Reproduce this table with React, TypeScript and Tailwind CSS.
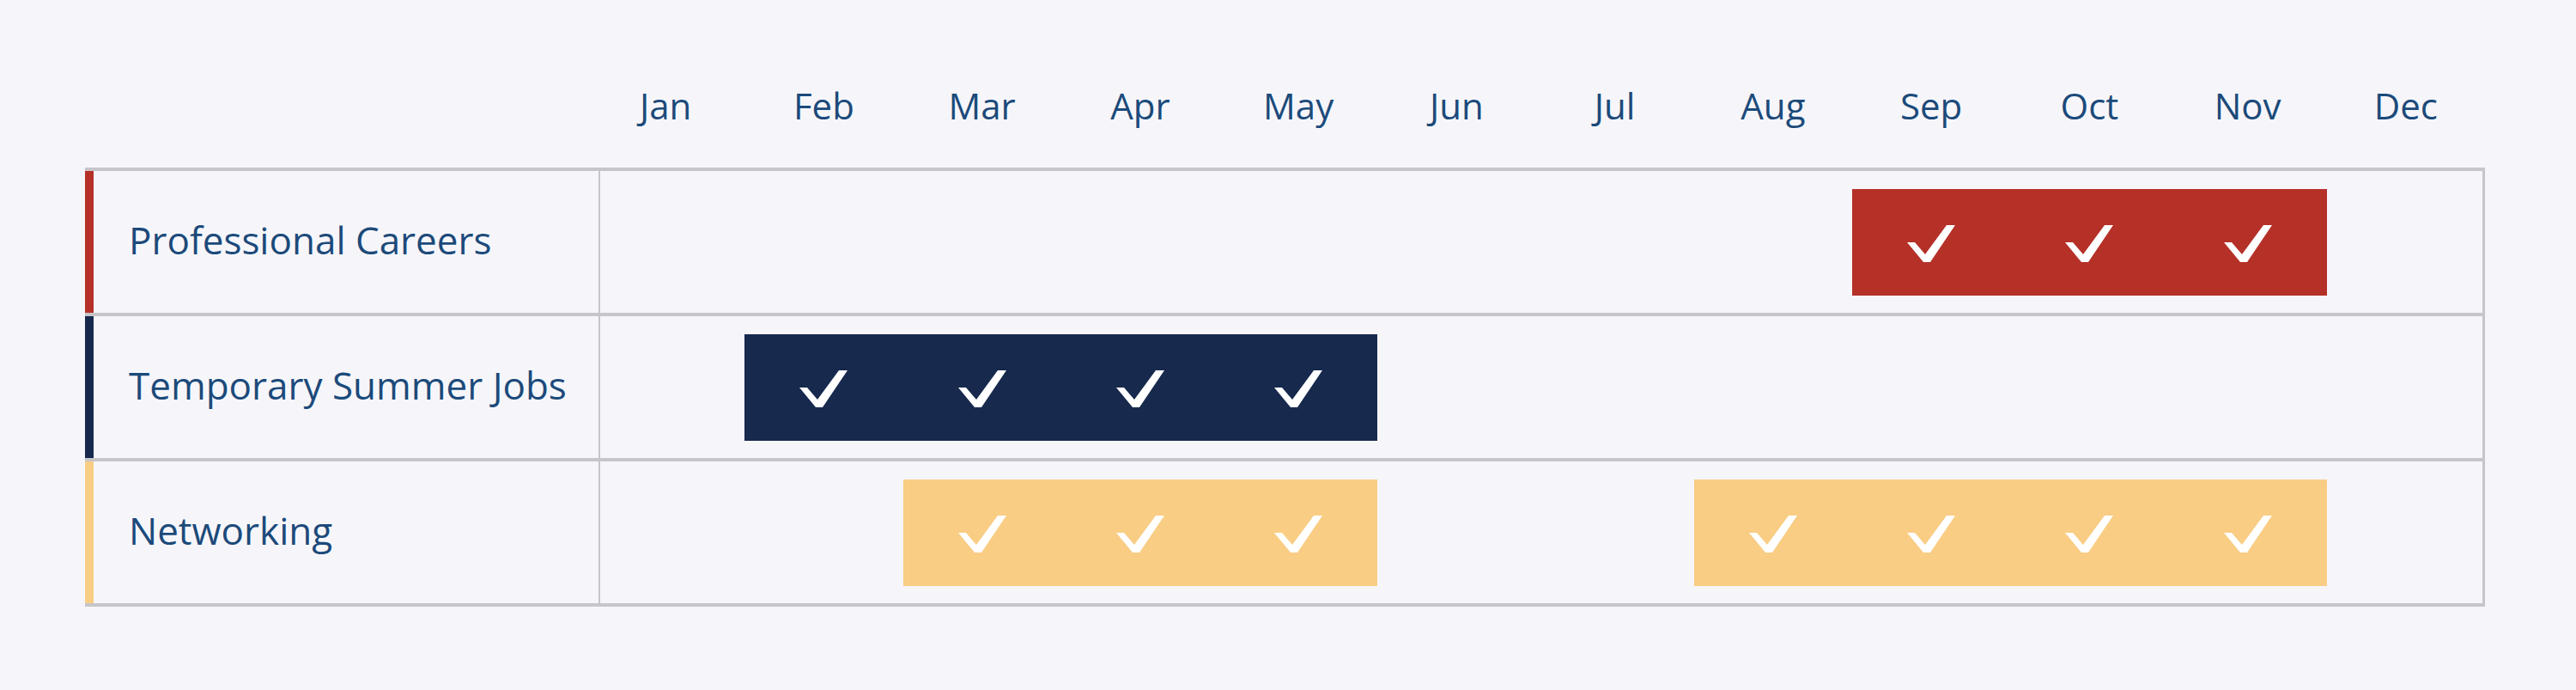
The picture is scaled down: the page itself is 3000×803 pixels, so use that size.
import React from "react";

const months = ["Jan", "Feb", "Mar", "Apr", "May", "Jun", "Jul", "Aug", "Sep", "Oct", "Nov", "Dec"];

function Check() {
  return (
    <svg width="56" height="43" viewBox="0 0 56 43" className="block">
      <polygon points="0,20 9,20 21,34 46,0 56,0 27,43 19,43" fill="#ffffff" />
    </svg>
  );
}

function Bar({ span, cls, n }: { span: string; cls: string; n: number }) {
  const cols = n === 3 ? "grid-cols-3" : "grid-cols-4";
  return (
    <div className={`${span} row-start-1 h-[124px] grid ${cols} ${cls}`}>
      {Array.from({ length: n }).map((_, i) => (
        <div key={i} className="flex items-center justify-center pt-[4px]">
          <Check />
        </div>
      ))}
    </div>
  );
}

function Row({ label, accent, children }: { label: string; accent: string; children: React.ReactNode }) {
  return (
    <div className="flex h-[169px] border-b-4 border-[#c6c6ca]">
      <div className={`w-[600px] shrink-0 flex items-center border-l-[10px] ${accent} border-r-2 border-r-[#c6c6ca] pl-[41px] pb-[6px]`}>
        <span className="text-[44px] leading-normal text-[#1c4a7a]">{label}</span>
      </div>
      <div className="flex-1 -ml-[16px] -mr-[3px] grid grid-cols-12 items-center">{children}</div>
    </div>
  );
}

export default function App() {
  return (
    <div className="w-[3000px] h-[803px] bg-[#f6f6fa] pl-[99px] font-['Open_Sans',sans-serif]">
      <div className="w-[2795px]">
        <div className="flex h-[195px] pt-[91px]">
          <div className="w-[584px] shrink-0" />
          <div className="flex-1 grid grid-cols-12">
            {months.map((m) => (
              <div key={m} className="text-center text-[42px] leading-normal text-[#1c4a7a]">
                {m}
              </div>
            ))}
          </div>
        </div>
        <div className="border-t-4 border-r-[3px] border-[#c6c6ca]">
          <Row label="Professional Careers" accent="border-l-[#b53128]">
            <Bar span="col-start-9 col-span-3" cls="bg-[#b53128]" n={3} />
          </Row>
          <Row label="Temporary Summer Jobs" accent="border-l-[#17294d]">
            <Bar span="col-start-2 col-span-4" cls="bg-[#17294d]" n={4} />
          </Row>
          <Row label="Networking" accent="border-l-[#f9cd84]">
            <Bar span="col-start-3 col-span-3" cls="bg-[#f9cd84]" n={3} />
            <Bar span="col-start-8 col-span-4" cls="bg-[#f9cd84]" n={4} />
          </Row>
        </div>
      </div>
    </div>
  );
}
